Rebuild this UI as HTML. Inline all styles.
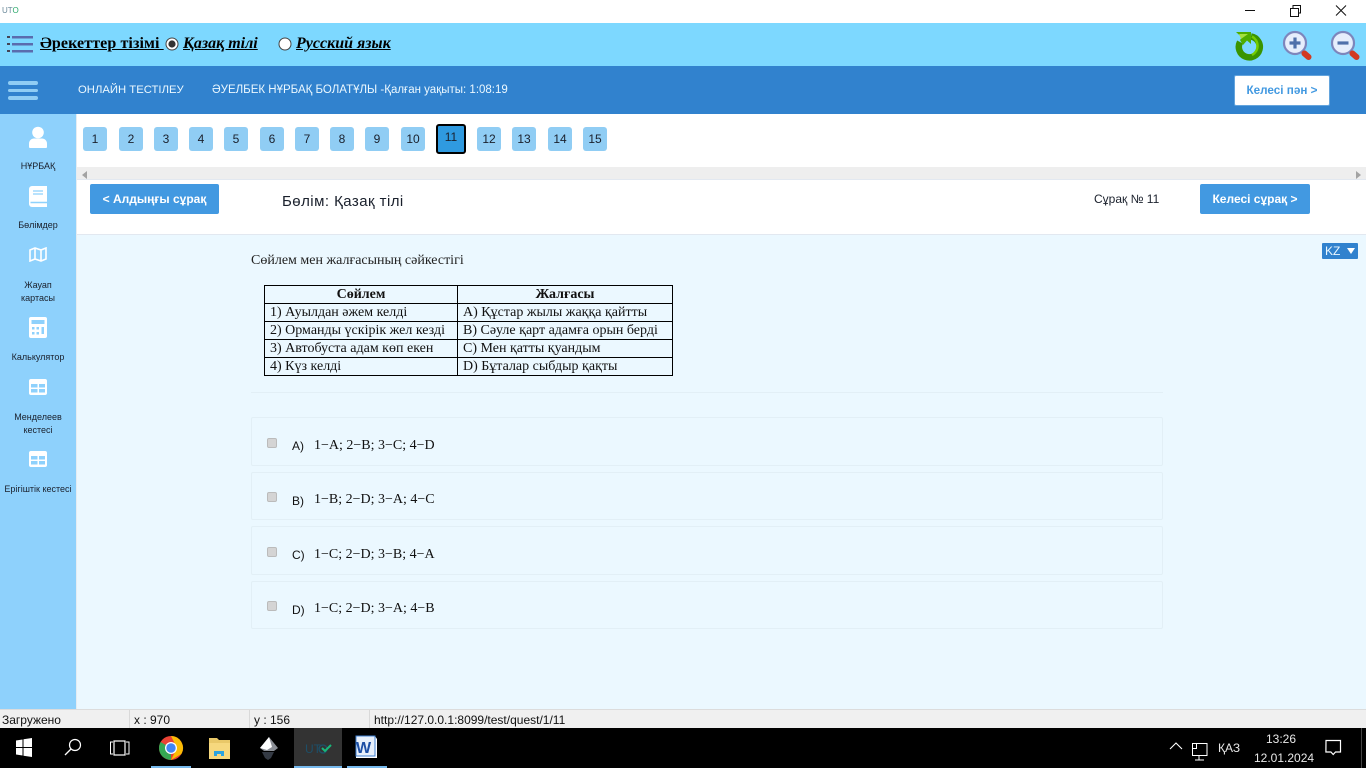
<!DOCTYPE html>
<html><head><meta charset="utf-8">
<style>
html,body{margin:0;padding:0;width:1366px;height:768px;overflow:hidden;background:#fff;font-family:"Liberation Sans",sans-serif;color:#111}
.a{position:absolute}
.t{position:absolute;white-space:nowrap}
.s{font-family:"Liberation Serif",serif}
.p{position:absolute;top:127px;width:24px;height:24px;background:#90cdf4;border-radius:3px;text-align:center;font-size:12px;line-height:25px;color:#1a202c}
.side{position:absolute;left:0;width:76px;text-align:center;font-size:9px;line-height:13px;color:#1a202c}
.opt{position:absolute;left:251px;width:910px;border:1px solid #e2eff6;border-radius:2px}
.cb{position:absolute;left:267px;width:8px;height:8px;background:#d4d4d4;border:1px solid #bbb;border-radius:2px}
.ol{position:absolute;left:292px;font-size:12px}
.ot{position:absolute;left:314px;font-family:"Liberation Serif",serif;font-size:14px;color:#111}
table{border-collapse:collapse;font-family:"Liberation Serif",serif;font-size:14px;line-height:16px;color:#111}
td,th{border:1px solid #000;padding:1px 0 0 5px;height:17px;box-sizing:border-box;white-space:nowrap}
th{text-align:center;padding:1px 0 0 0}
</style></head><body>

<div class="a" style="left:0;top:0;width:1366px;height:23px;background:#fff"></div>
<div class="t" style="left:2px;top:6px;font-size:8px;color:#6b8a9a">UT<span style="color:#2aa86a">O</span></div>
<svg class="a" style="left:1160px;top:0" width="206" height="23">
<line x1="85" y1="10.5" x2="95" y2="10.5" stroke="#111"/>
<rect x="130.5" y="8.5" width="8" height="8" fill="#fff" stroke="#111"/><path d="M133 8V5.5h7.5V13H139" fill="none" stroke="#111"/>
<path d="M176 5.5l10 10M186 5.5l-10 10" stroke="#111" fill="none"/>
</svg>

<div class="a" style="left:0;top:23px;width:1366px;height:43px;background:#7dd8ff"></div>
<svg class="a" style="left:6px;top:34px" width="28" height="20">
<g fill="#5a6cae"><rect x="6" y="2" width="21" height="2.500"/><rect x="6" y="9" width="21" height="2.500"/><rect x="6" y="16" width="21" height="2.500"/></g>
<g fill="#445"><rect x="1" y="2" width="3" height="2"/><rect x="1" y="9" width="3" height="2"/><rect x="1" y="16" width="3" height="2"/></g>
</svg>
<div class="t s" style="left:40px;top:35px;font-size:16px;font-weight:bold;color:#000;text-decoration:underline;letter-spacing:.1px">Әрекеттер тізімі&nbsp;</div>
<svg class="a" style="left:165px;top:37px" width="15" height="15"><circle cx="7" cy="7" r="6" fill="#fff" stroke="#444"/><circle cx="7" cy="7" r="3.600" fill="#333"/></svg>
<div class="t s" style="left:183px;top:35px;font-size:16px;font-weight:bold;font-style:italic;color:#000;text-decoration:underline">Қазақ тілі</div>
<svg class="a" style="left:278px;top:37px" width="15" height="15"><circle cx="7" cy="7" r="6" fill="#fff" stroke="#444"/></svg>
<div class="t s" style="left:296px;top:35px;font-size:16px;font-weight:bold;font-style:italic;color:#000;text-decoration:underline">Русский язык</div>

<svg class="a" style="left:1233px;top:29px" width="32" height="32" viewBox="0 0 32 32">
<path d="M18 7.500A10.500 10.500 0 1 1 7 13" fill="none" stroke="#3a9400" stroke-width="6.500"/>
<path d="M19 7.500A10.500 10.500 0 0 1 19 26" fill="none" stroke="#74cc00" stroke-width="2.500"/>
<path d="M3 3h15v12l-4-3.500-4 4.500-3-5 2-2.500z" fill="#4fad00"/>
<path d="M6 5h9l-7 5z" fill="#a4e040"/>
</svg>
<svg class="a" style="left:1281px;top:29px" width="32" height="32" viewBox="0 0 32 32">
<circle cx="14" cy="14" r="11" fill="#e6eefc" stroke="#7d86bc" stroke-width="2.200"/>
<path d="M8.500 14h11M14 8.500v11" stroke="#4f70aa" stroke-width="3.200"/>
<path d="M23.500 24.500l4 3.500" stroke="#d23a22" stroke-width="6" stroke-linecap="round"/>
</svg>
<svg class="a" style="left:1329px;top:29px" width="32" height="32" viewBox="0 0 32 32">
<circle cx="14" cy="14" r="11" fill="#e6eefc" stroke="#7d86bc" stroke-width="2.200"/>
<path d="M8.500 14h11" stroke="#4f70aa" stroke-width="3.200"/>
<path d="M23.500 24.500l4 3.500" stroke="#d23a22" stroke-width="6" stroke-linecap="round"/>
</svg>

<div class="a" style="left:0;top:66px;width:1366px;height:48px;background:#3182ce"></div>
<div class="a" style="left:8px;top:81px;width:30px;height:4px;background:#90cdf4;border-radius:2px"></div>
<div class="a" style="left:8px;top:89px;width:30px;height:3px;background:#90cdf4;border-radius:2px"></div>
<div class="a" style="left:8px;top:96px;width:30px;height:4px;background:#90cdf4;border-radius:2px"></div>
<div class="t" style="left:78px;top:84px;font-size:11.300px;color:#ebf8ff">ОНЛАЙН ТЕСТІЛЕУ</div>
<div class="t" style="left:212px;top:84px;font-size:11.500px;color:#ebf8ff">ӘУЕЛБЕК НҰРБАҚ БОЛАТҰЛЫ -Қалған уақыты: 1:08:19</div>
<div class="a" style="left:1234px;top:75px;width:94px;height:29px;background:#fff;border:1px solid #63a4dd;border-radius:2px;text-align:center;font-size:11.700px;font-weight:bold;line-height:30px;color:#4299e1">Келесі пән &gt;</div>

<div class="a" style="left:0;top:114px;width:76px;height:596px;background:#8ed1fc"></div>
<div class="a" style="left:76px;top:114px;width:1px;height:596px;background:#e4ecf2"></div>
<div class="a" style="left:77px;top:114px;width:1289px;height:53px;background:#fff"></div>
<div class="a" style="left:77px;top:167px;width:1289px;height:12px;background:#eeeeee"></div>
<div class="a" style="left:82px;top:171px;width:0;height:0;border:4px solid transparent;border-left:0;border-right:5px solid #a3a3a3"></div>
<div class="a" style="left:1356px;top:171px;width:0;height:0;border:4px solid transparent;border-right:0;border-left:5px solid #a3a3a3"></div>
<div class="a" style="left:77px;top:179px;width:1289px;height:56px;background:#fff;border-top:1px solid #e2e8f0;border-bottom:1px solid #e2e8f0;box-sizing:border-box"></div>
<div class="a" style="left:77px;top:235px;width:1289px;height:475px;background:#ebf8ff"></div>

<svg class="a" style="left:28px;top:126px" width="20" height="22" viewBox="0 0 20 22" fill="#fff"><circle cx="10" cy="6.500" r="5.800"/><path d="M1 21v-3.500c0-3 2.500-5 5-5h8c2.500 0 5 2 5 5V21c0 .5-.5 1-1 1H2c-.5 0-1-.5-1-1z"/></svg>
<div class="side" style="top:160px">НҰРБАҚ</div>
<svg class="a" style="left:29px;top:186px" width="18" height="21" viewBox="0 0 18 21"><path d="M3 0h15v21H3a3 3 0 0 1-3-3V3a3 3 0 0 1 3-3z" fill="#fff"/><path d="M4 5h10M4 8h10" stroke="#8ed1fc" stroke-width="1.300"/><path d="M1.500 16.500H18" stroke="#8ed1fc" stroke-width="1.500"/></svg>
<div class="side" style="top:219px">Бөлімдер</div>
<svg class="a" style="left:29px;top:247px" width="18" height="15" viewBox="0 0 18 15" fill="none" stroke="#fff" stroke-width="1.600"><path d="M1 3l5-2 6 2 5-2v11l-5 2-6-2-5 2zM6 1v11M12 3v11"/></svg>
<div class="side" style="top:279px">Жауап<br>картасы</div>
<svg class="a" style="left:29px;top:317px" width="18" height="21" viewBox="0 0 18 21"><rect width="18" height="21" rx="2" fill="#fff"/><rect x="2.500" y="3" width="13" height="4" fill="#8ed1fc"/><g fill="#8ed1fc"><rect x="3" y="10" width="2.500" height="2.500"/><rect x="7.500" y="10" width="2.500" height="2.500"/><rect x="12.500" y="10" width="2.500" height="7"/><rect x="3" y="15" width="2.500" height="2.500"/><rect x="7.500" y="15" width="2.500" height="2.500"/></g></svg>
<div class="side" style="top:351px">Калькулятор</div>
<svg class="a" style="left:29px;top:379px" width="18" height="16" viewBox="0 0 18 16"><rect width="18" height="16" rx="2" fill="#fff"/><g fill="#8ed1fc"><rect x="2" y="5" width="6.500" height="3.500"/><rect x="10" y="5" width="6" height="3.500"/><rect x="2" y="10" width="6.500" height="3.500"/><rect x="10" y="10" width="6" height="3.500"/></g></svg>
<div class="side" style="top:411px">Менделеев<br>кестесі</div>
<svg class="a" style="left:29px;top:451px" width="18" height="16" viewBox="0 0 18 16"><rect width="18" height="16" rx="2" fill="#fff"/><g fill="#8ed1fc"><rect x="2" y="5" width="6.500" height="3.500"/><rect x="10" y="5" width="6" height="3.500"/><rect x="2" y="10" width="6.500" height="3.500"/><rect x="10" y="10" width="6" height="3.500"/></g></svg>
<div class="side" style="top:483px">Ерігіштік кестесі</div>

<div class="p" style="left:83px">1</div>
<div class="p" style="left:119px">2</div>
<div class="p" style="left:154px">3</div>
<div class="p" style="left:189px">4</div>
<div class="p" style="left:224px">5</div>
<div class="p" style="left:260px">6</div>
<div class="p" style="left:295px">7</div>
<div class="p" style="left:330px">8</div>
<div class="p" style="left:365px">9</div>
<div class="p" style="left:401px">10</div>
<div class="a" style="left:436px;top:124px;width:26px;height:26px;background:#2f9ae0;border:2px solid #000;border-radius:3px;text-align:center;font-size:12px;line-height:23px;color:#1a202c">11</div>
<div class="p" style="left:477px">12</div>
<div class="p" style="left:512px">13</div>
<div class="p" style="left:548px">14</div>
<div class="p" style="left:583px">15</div>

<div class="a" style="left:90px;top:184px;width:129px;height:30px;background:#4299e1;border-radius:2px;text-align:center;font-size:12px;font-weight:bold;line-height:31px;color:#fff">&lt; Алдыңғы сұрақ</div>
<div class="t" style="left:282px;top:193px;font-size:15px;letter-spacing:.45px;color:#1a202c">Бөлім: Қазақ тілі</div>
<div class="t" style="left:1094px;top:192px;font-size:12px;color:#1a202c">Сұрақ № 11</div>
<div class="a" style="left:1200px;top:184px;width:110px;height:30px;background:#4299e1;border-radius:2px;text-align:center;font-size:12px;font-weight:bold;line-height:31px;color:#fff">Келесі сұрақ &gt;</div>

<div class="a" style="left:1322px;top:243px;width:36px;height:16px;background:#3182ce;border-radius:1px"></div>
<div class="t" style="left:1325px;top:244px;font-size:12px;color:#ebf8ff">KZ</div>
<div class="a" style="left:1347px;top:248px;width:0;height:0;border-left:4px solid transparent;border-right:4px solid transparent;border-top:6px solid #fff"></div>

<div class="t s" style="left:251px;top:253px;font-size:14px;color:#222">Сөйлем мен жалғасының сәйкестігі</div>

<table class="a" style="left:264px;top:285px;width:408px;table-layout:fixed;height:91px">
<colgroup><col style="width:193px"><col style="width:215px"></colgroup>
<tr><th>Сөйлем</th><th>Жалғасы</th></tr>
<tr><td>1) Ауылдан әжем келді</td><td>A) Құстар жылы жаққа қайтты</td></tr>
<tr><td>2) Орманды үскірік жел кезді</td><td>B) Сәуле қарт адамға орын берді</td></tr>
<tr><td>3) Автобуста адам көп екен</td><td>C) Мен қатты қуандым</td></tr>
<tr><td>4) Күз келді</td><td>D) Бұталар сыбдыр қақты</td></tr>
</table>

<div class="a" style="left:251px;top:392px;width:912px;height:1px;background:#e2eff6"></div>

<div class="opt" style="top:417px;height:47px"></div>
<div class="cb" style="top:438px"></div><div class="ol" style="top:439px">A)</div><div class="ot" style="top:438px">1−A; 2−B; 3−C; 4−D</div>
<div class="opt" style="top:472px;height:46px"></div>
<div class="cb" style="top:492px"></div><div class="ol" style="top:494px">B)</div><div class="ot" style="top:492px">1−B; 2−D; 3−A; 4−C</div>
<div class="opt" style="top:526px;height:47px"></div>
<div class="cb" style="top:547px"></div><div class="ol" style="top:548px">C)</div><div class="ot" style="top:547px">1−C; 2−D; 3−B; 4−A</div>
<div class="opt" style="top:581px;height:46px"></div>
<div class="cb" style="top:601px"></div><div class="ol" style="top:603px">D)</div><div class="ot" style="top:601px">1−C; 2−D; 3−A; 4−B</div>

<div class="a" style="left:0;top:709px;width:1366px;height:19px;background:#f0f0f0;border-top:1px solid #dcdcdc;box-sizing:border-box"></div>
<div class="a" style="left:129px;top:710px;width:1px;height:18px;background:#d9d9d9"></div>
<div class="a" style="left:249px;top:710px;width:1px;height:18px;background:#d9d9d9"></div>
<div class="a" style="left:369px;top:710px;width:1px;height:18px;background:#d9d9d9"></div>
<div class="t" style="left:2px;top:713px;font-size:12px;color:#111">Загружено</div>
<div class="t" style="left:134px;top:713px;font-size:12px;color:#111">x : 970</div>
<div class="t" style="left:254px;top:713px;font-size:12px;color:#111">y : 156</div>
<div class="t" style="left:374px;top:713px;font-size:12px;color:#111">http://127.0.0.1:8099/test/quest/1/11</div>

<div class="a" style="left:0;top:728px;width:1366px;height:40px;background:#000"></div>
<div class="a" style="left:294px;top:728px;width:48px;height:40px;background:#333"></div>
<div class="a" style="left:151px;top:766px;width:40px;height:2px;background:#76b9ed"></div>
<div class="a" style="left:294px;top:766px;width:48px;height:2px;background:#76b9ed"></div>
<div class="a" style="left:347px;top:766px;width:40px;height:2px;background:#76b9ed"></div>

<svg class="a" style="left:0;top:728px" width="400" height="40">
<path d="M16 12.500l6.500-1v7.500H16zM23.500 11.300L32 10v9h-8.500zM16 20h6.500v7.500l-6.500-1zM23.500 20H32v9l-8.500-1.300z" fill="#fff"/>
<circle cx="75" cy="17" r="5.500" fill="none" stroke="#fff" stroke-width="1.200"/><path d="M71 21l-6 6" stroke="#fff" stroke-width="1.300"/>
<rect x="114" y="13" width="11" height="14" fill="none" stroke="#fff" stroke-width="1.200"/><path d="M113 14h-2.500v12H113M126 14h3v12h-3" fill="none" stroke="#fff"/>
<circle cx="171" cy="20" r="12" fill="#ea4335"/><path d="M171 8a12 12 0 0 1 10.400 18L171 32l6-12z" fill="#fbbc05"/><path d="M171 20L160.600 14A12 12 0 0 0 165 30.400z" fill="#34a853"/><path d="M171 20L165 30.400A12 12 0 0 0 171 32z" fill="#34a853"/><circle cx="171" cy="20" r="6" fill="#fff"/><circle cx="171" cy="20" r="4.700" fill="#4285f4"/>
<path d="M209 10h8l2 2h11v19h-21z" fill="#e9c868"/><rect x="209" y="15" width="21" height="16" fill="#f6d87e"/><path d="M214 28v-5h10v5h-3v-2h-4v2z" fill="#2ba3e0"/>
<path d="M269 9l9 11-4 3h-10l-4-3z" fill="#8b8f96"/><path d="M269 9l-9 11 7 2 5-3z" fill="#fff"/><path d="M262 24h12l-3 6-3 2-3-2z" fill="#343a44"/>
<text x="305" y="25" font-family="Liberation Sans,sans-serif" font-size="12" fill="#1d4f68">UT</text><circle cx="323" cy="21" r="4" fill="none" stroke="#1d4f68" stroke-width="1.300"/><path d="M322 20l3 3 6-6" stroke="#18b87a" stroke-width="2" fill="none"/>
<path d="M356 8h19l2 3v19h-21z" fill="#fff"/><rect x="356" y="8" width="19" height="20" fill="#e8f0fb" stroke="#3f7fd0"/>
<text x="356" y="25" font-family="Liberation Sans,sans-serif" font-size="16" font-weight="bold" fill="#1d4fa5">W</text>
</svg>

<svg class="a" style="left:1150px;top:728px" width="216" height="40">
<path d="M20 21l6-6 6 6" fill="none" stroke="#fff" stroke-width="1.100"/>
<path d="M46.500 15.500h10.500v12H42.500v-7" fill="none" stroke="#fff"/>
<rect x="42.500" y="15.500" width="4" height="5" fill="none" stroke="#fff"/>
<path d="M49 27.500v4M45 32h9" stroke="#fff"/>
<path d="M176 12.500h14.500v11.500h-5l-2.300 2.500-2.300-2.500h-5z" fill="none" stroke="#fff" stroke-width="1.200"/>
<line x1="211.500" y1="0" x2="211.500" y2="40" stroke="#444"/>
</svg>
<div class="t" style="left:1218px;top:741px;font-size:12px;color:#e8e8e8">ҚАЗ</div>
<div class="t" style="left:1266px;top:732px;font-size:12px;color:#e8e8e8">13:26</div>
<div class="t" style="left:1254px;top:751px;font-size:12px;color:#e8e8e8">12.01.2024</div>
</body></html>
